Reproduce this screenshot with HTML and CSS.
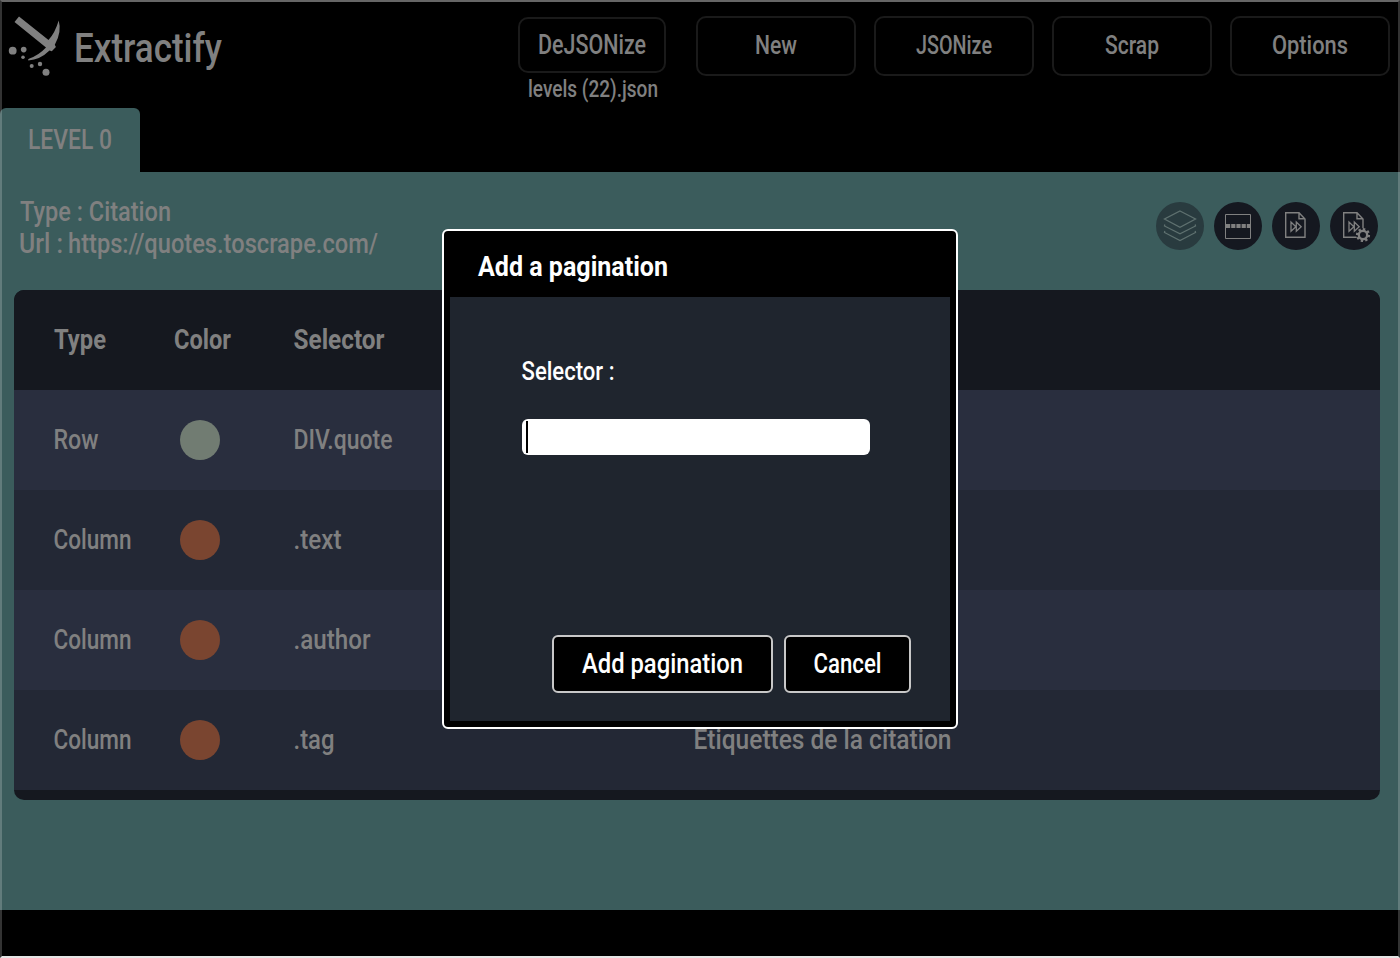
FILE: index.html
```html
<!DOCTYPE html>
<html lang="en">
<head>
<meta charset="utf-8">
<title>Extractify</title>
<link rel="stylesheet" href="styles.css">
</head>
<body>
<div class="app">
  <header class="topbar">
    <div class="brand">
      <svg class="logo" width="56" height="64" viewBox="0 0 56 64">
        <path d="M11 2.500 L40.500 26 Q47 19 50.700 6.500 Q54 18 46.800 30.800 L47.900 33 L43.800 37.300 L41.500 36.600 Q32 46 20.300 46.500 Q19.500 45 21.500 44.500 Q31 41 38 33.500 L6.500 8 Z"/>
        <circle cx="4.700" cy="36.700" r="3.900"/><circle cx="15.700" cy="35.600" r="2.800"/><circle cx="15" cy="43.300" r="1.800"/>
        <circle cx="23.700" cy="52" r="2"/><circle cx="32" cy="50" r="2.200"/><circle cx="38" cy="58.200" r="3.500"/>
      </svg>
      <svg class="label brand-name" width="146" height="50"><text class="t40" x="1" y="38" textLength="148" lengthAdjust="spacingAndGlyphs">Extractify</text></svg>
    </div>
    <nav class="menu">
      <div class="upload">
        <div class="upload-btn"><svg class="label" width="109" height="32"><text y="25" textLength="108" lengthAdjust="spacingAndGlyphs">DeJSONize</text></svg></div>
        <svg class="label" width="131" height="32"><text class="t24" x="1" y="24" textLength="130" lengthAdjust="spacingAndGlyphs">levels (22).json</text></svg>
      </div>
      <div class="menu-btn"><svg class="label" width="42" height="32"><text class="t26" y="24" textLength="42" lengthAdjust="spacingAndGlyphs">New</text></svg></div>
      <div class="menu-btn"><svg class="label" width="77" height="32"><text class="t26" y="24" textLength="76" lengthAdjust="spacingAndGlyphs">JSONize</text></svg></div>
      <div class="menu-btn"><svg class="label" width="55" height="32"><text class="t26" y="24" textLength="54" lengthAdjust="spacingAndGlyphs">Scrap</text></svg></div>
      <div class="menu-btn"><svg class="label" width="77" height="32"><text class="t26" y="24" textLength="76" lengthAdjust="spacingAndGlyphs">Options</text></svg></div>
    </nav>
  </header>
  <div class="tabs">
    <div class="tab"><svg class="label" width="85" height="32"><text y="25" textLength="84" lengthAdjust="spacingAndGlyphs">LEVEL 0</text></svg></div>
  </div>
  <main class="panel">
    <div class="panel-head">
      <div class="info">
        <svg class="label" width="153" height="32"><text x="1" y="25" textLength="151" lengthAdjust="spacingAndGlyphs">Type : Citation</text></svg>
        <svg class="label" width="360" height="32"><text y="25"><tspan textLength="44" lengthAdjust="spacingAndGlyphs">Url :</tspan> <tspan x="49" textLength="310" lengthAdjust="spacingAndGlyphs">https://quotes.toscrape.com/</tspan></text></svg>
      </div>
      <div class="actions">
        <div class="round disabled"><svg width="48" height="48" viewBox="0 0 48 48"><path class="thin" d="M24 9 39.500 17 24 25.200 8.500 17ZM8.800 22.500 8.500 24 24 31.800l15.500-7.800-.3-1.500M8.800 29 8.500 30.500 24 38.500l15.500-8-.3-1.500"/></svg></div>
        <div class="round"><svg width="48" height="48" viewBox="0 0 48 48"><path d="M11.500 12.500h25v24h-25z"/><path class="dash" d="M12 24h25"/></svg></div>
        <div class="round"><svg width="48" height="48" viewBox="0 0 48 48"><path class="thick" d="M13.700 10.700H27l6 6.300v18.300H13.700zM27 10.700v6h6"/><path class="thin" d="M19 20v9.300l4.900-4.600zM24.300 20v9.300l4.900-4.600z"/></svg></div>
        <div class="round"><svg width="48" height="48" viewBox="0 0 48 48"><path class="thick" d="M28 35.300H13.700V10.700H27l6 6.300v11M27 10.700v6h6"/><path class="thin" d="M19 20v9.300l4.900-4.600zM24.300 20v9.300l4.900-4.600z"/><circle class="gear-bg" cx="33" cy="33" r="6.800"/><circle class="gear-teeth" cx="33" cy="33" r="5.900" pathLength="80"/><circle class="gear" cx="33" cy="33" r="4.200"/></svg></div>
      </div>
    </div>
    <section class="table">
      <div class="row head">
        <svg class="label" width="53" height="32"><text x="1" y="25" textLength="52" lengthAdjust="spacingAndGlyphs">Type</text></svg>
        <svg class="label" width="58" height="32"><text y="25" x="1" textLength="57" lengthAdjust="spacingAndGlyphs">Color</text></svg>
        <svg class="label" width="92" height="32"><text x="0.500" y="25" textLength="91" lengthAdjust="spacingAndGlyphs">Selector</text></svg>
      </div>
      <div class="row">
        <svg class="label" width="46" height="32"><text x="0.500" y="25" textLength="45" lengthAdjust="spacingAndGlyphs">Row</text></svg>
        <span class="swatch green"></span>
        <svg class="label" width="101" height="32"><text x="0.500" y="25" textLength="99" lengthAdjust="spacingAndGlyphs">DIV.quote</text></svg>
      </div>
      <div class="row">
        <svg class="label" width="79" height="32"><text x="0.500" y="25" textLength="78" lengthAdjust="spacingAndGlyphs">Column</text></svg>
        <span class="swatch"></span>
        <svg class="label" width="49" height="32"><text x="0.500" y="25" textLength="48" lengthAdjust="spacingAndGlyphs">.text</text></svg>
      </div>
      <div class="row">
        <svg class="label" width="79" height="32"><text x="0.500" y="25" textLength="78" lengthAdjust="spacingAndGlyphs">Column</text></svg>
        <span class="swatch"></span>
        <svg class="label" width="78" height="32"><text x="0.500" y="25" textLength="77" lengthAdjust="spacingAndGlyphs">.author</text></svg>
      </div>
      <div class="row">
        <svg class="label" width="79" height="32"><text x="0.500" y="25" textLength="78" lengthAdjust="spacingAndGlyphs">Column</text></svg>
        <span class="swatch"></span>
        <svg class="label" width="42" height="32"><text x="0.500" y="25" textLength="41" lengthAdjust="spacingAndGlyphs">.tag</text></svg>
        <svg class="label" width="259" height="32"><text x="0.500" y="25" textLength="258" lengthAdjust="spacingAndGlyphs">Etiquettes de la citation</text></svg>
      </div>
    </section>
  </main>
</div>
<div class="frame"></div>
<div class="backdrop">
  <div class="modal">
    <div class="modal-title"><svg class="label" width="191" height="32"><text x="1" y="25" textLength="190" lengthAdjust="spacingAndGlyphs">Add a pagination</text></svg></div>
    <div class="modal-body">
      <svg class="label" width="94" height="32"><text class="t26" x="0.500" y="25" textLength="93" lengthAdjust="spacingAndGlyphs">Selector :</text></svg>
      <div class="field"><span class="caret"></span></div>
      <div class="modal-actions">
        <div class="btn"><svg class="label" width="162" height="32"><text y="25" textLength="161" lengthAdjust="spacingAndGlyphs">Add pagination</text></svg></div>
        <div class="btn cancel"><svg class="label" width="69" height="32"><text x="0.500" y="25" textLength="68" lengthAdjust="spacingAndGlyphs">Cancel</text></svg></div>
      </div>
    </div>
  </div>
</div>
</body>
</html>
```

FILE: styles.css
```css
* { box-sizing: border-box; }
body { margin: 0; background: #000; font-family: Roboto, "Liberation Sans", sans-serif; overflow: hidden; }
.app { height: 958px; display: flex; flex-direction: column; }
.label { display: block; overflow: visible; flex: none; fill: #808080; font-size: 28px; font-weight: 500; }
.t40 { font-size: 40px; }
.t26 { font-size: 26px; }
.t24 { font-size: 24px; }

.topbar { height: 108px; display: flex; justify-content: space-between; padding: 14px 10px 0 8px; }
.brand { display: flex; }
.logo { fill: #808080; }
.brand-name { margin: 10px 0 0 9px; }
.menu { display: flex; gap: 18px; padding-top: 2px; }
.upload { width: 148px; margin-right: 12px; padding-top: 1px; display: flex; flex-direction: column; align-items: center; }
.upload-btn { width: 148px; height: 56px; border: 2px solid #1a1a1a; border-radius: 10px; display: flex; justify-content: center; padding-top: 10px; }
.menu-btn { width: 160px; height: 60px; border: 2px solid #1a1a1a; border-radius: 10px; display: flex; align-items: center; justify-content: center; }

.tabs { height: 64px; display: flex; }
.tab { width: 140px; background: #3b5c5c; border-radius: 6px 6px 0 0; display: flex; justify-content: center; align-items: center; }

.panel { height: 738px; background: #3b5c5c; padding: 24px 20px 0 14px; }
.panel-head { height: 94px; display: flex; justify-content: space-between; padding: 0 2px 0 5px; }
.actions { display: flex; gap: 10px; padding-top: 6px; }
.round { width: 48px; height: 48px; border-radius: 50%; background: #151820; }
.round.disabled { background: #293b3f; }
.round svg { display: block; fill: none; stroke: #808080; stroke-width: 1; }
.round.disabled svg { stroke: #5e706f; }
.round .thick { stroke-width: 1.4; }
.round .thin { stroke-width: 1.3; }
.round .dash { stroke-width: 4; stroke-dasharray: 4.2 1; }
.round .gear-bg { fill: #151820; stroke: none; }
.round .gear-teeth { stroke-width: 2.4; stroke-dasharray: 5 5; }
.round .gear { stroke-width: 2.4; }

.table { background: #15181f; border-radius: 10px; overflow: hidden; padding-bottom: 10px; }
.row { height: 100px; display: grid; grid-template-columns: 120px 120px 400px 1fr; align-items: center; padding-left: 39px; background: #292e3e; }
.row:nth-child(odd) { background: #232835; }
.row.head { background: #15181f; }
.row.head .label { font-weight: 700; }
.swatch { width: 40px; height: 40px; margin-left: 7px; border-radius: 50%; background: #7a4530; }
.swatch.green { background: #717c72; }

.frame { position: absolute; inset: 0; border: 2px solid rgba(255, 255, 255, .2); border-top-color: #666; border-bottom-color: #e5e5e5; }
.backdrop { position: absolute; inset: 0; display: flex; align-items: center; justify-content: center; }
.modal { width: 516px; height: 500px; background: #000; border: 2px solid #fff; border-radius: 6px; padding: 0 6px 6px; }
.modal .label { fill: #fff; font-weight: 500; }
.modal-title { height: 66px; padding: 20px 0 0 27px; }
.modal .modal-title .label { font-weight: 700; }
.modal-body { height: 424px; background: #1f252e; padding: 58px 39px 28px 71px; display: flex; flex-direction: column; }
.field { width: 348px; height: 36px; margin: 32px 0 0 1px; flex: none; background: #fff; border-radius: 6px; padding: 2px 4px; }
.caret { display: block; width: 2px; height: 32px; background: #000; }
.modal-actions { margin-top: auto; display: flex; justify-content: flex-end; gap: 11px; }
.btn { width: 221px; height: 58px; background: #000; border: 2px solid #c8c8c8; border-radius: 6px; display: flex; align-items: center; justify-content: center; }
.btn.cancel { width: 127px; }
```
